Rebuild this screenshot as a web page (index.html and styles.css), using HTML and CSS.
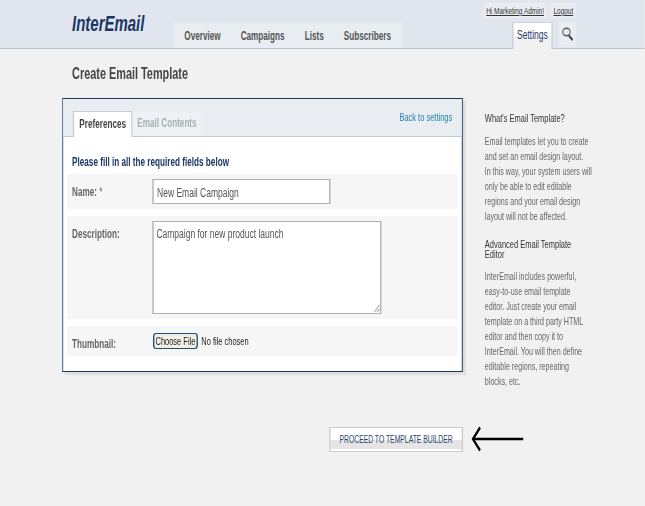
FILE: index.html
```html
<!DOCTYPE html>
<html lang="en">
<head>
<meta charset="utf-8">
<title>Create Email Template</title>
<link rel="stylesheet" href="styles.css">
</head>
<body>
<div class="frame">
<div class="page">
<header class="header">
  <div class="logo">InterEmail</div>
  <nav class="nav">
    <a class="nav-link">Overview</a>
    <a class="nav-link">Campaigns</a>
    <a class="nav-link">Lists</a>
    <a class="nav-link">Subscribers</a>
  </nav>
  <div class="header-right">
    <div class="user-links">
      <a class="user-link user-hello"><span class="underline">Hi Marketing Admin!</span></a>
      <a class="user-link user-logout"><span class="underline">Logout</span></a>
    </div>
    <div class="tools">
      <a class="settings-tab">Settings</a>
      <a class="search-tab">
        <svg width="20" height="14" viewBox="0 0 20 14" aria-hidden="true">
          <ellipse cx="8" cy="5" rx="5.500" ry="3.700" fill="none" stroke="#555" stroke-width="1.500"/>
          <path d="M11.500 8.500l5.500 4.500" stroke="#444" stroke-width="2.600" fill="none"/>
        </svg>
      </a>
    </div>
  </div>
</header>
<h1 class="page-title">Create Email Template</h1>
<main class="content">
  <div class="main-col">
    <section class="card">
      <div class="tabbar">
        <a class="tab tab-active">Preferences</a>
        <a class="tab">Email Contents</a>
        <a class="back-link">Back to settings</a>
      </div>
      <div class="card-body">
        <h2 class="form-title">Please fill in all the required fields below</h2>
        <div class="row row-name">
          <label class="label">Name: <span class="req">*</span></label>
          <input class="text-input" type="text" value="New Email Campaign">
        </div>
        <div class="row row-desc">
          <label class="label">Description:</label>
          <textarea class="text-area">Campaign for new product launch</textarea>
        </div>
        <div class="row row-thumb">
          <label class="label">Thumbnail:</label>
          <input class="file-input" type="file">
        </div>
      </div>
    </section>
    <div class="actions">
      <a class="proceed">PROCEED TO TEMPLATE BUILDER</a>
      <svg class="arrow" width="77" height="26" viewBox="0 0 77 26" aria-hidden="true">
        <path d="M77 13H3" stroke="#000" stroke-width="2.400" fill="none"/>
        <path d="M13 1.500L2.500 13 13 24.500" stroke="#000" stroke-width="3" fill="none"/>
      </svg>
    </div>
  </div>
  <aside class="sidebar">
    <h3 class="side-title">What's Email Template?</h3>
    <p class="side-text">Email templates let you to create and set an email design layout.<br>In this way, your system users will only be able to edit editable regions and your email design layout will not be affected.</p>
    <h3 class="side-title side-title-wrap">Advanced Email Template Editor</h3>
    <p class="side-text">InterEmail includes powerful,<br>easy-to-use email template<br>editor. Just create your email<br>template on a third party HTML<br>editor and then copy it to<br>InterEmail. You will then define<br>editable regions, repeating<br>blocks, etc.</p>
  </aside>
</main>
</div>
</div>
</body>
</html>
```
FILE: styles.css
```css
* { box-sizing: border-box; }
body {
  margin: 0;
  background: #f1f1f1;
  font-family: "Liberation Sans", Arial, sans-serif;
  color: #444;
}
.frame {
  width: 645px;
  height: 506px;
  overflow: hidden;
}
.page {
  width: 948px;
  height: 506px;
  transform: scaleX(0.68);
  transform-origin: 0 0;
}
.header {
  height: 49px;
  background: #e1e6ee;
  border-bottom: 1px solid #b9c6d2;
  display: flex;
  align-items: flex-end;
  padding: 0 101px 0 106px;
}
.logo {
  align-self: flex-start;
  margin-top: 12px;
  width: 150px;
  font: italic bold 22px/24px "Liberation Sans", sans-serif;
  color: #1a3767;
}
.nav {
  height: 25px;
  background: #e9edf2;
  display: flex;
  align-items: center;
  gap: 29.5px;
  padding: 0 16px 0 15px;
}
.nav-link {
  font-size: 12px;
  font-weight: bold;
  color: #555;
}
.header-right {
  margin-left: auto;
  align-self: stretch;
  display: flex;
  flex-direction: column;
  align-items: flex-end;
  justify-content: space-between;
}
.user-links {
  display: flex;
  gap: 6px;
  margin-top: 3px;
}
.user-link {
  font-size: 9.5px;
  line-height: 15px;
  background: #e9edf2;
  color: #333;
  text-align: center;
}
.underline { text-decoration: underline; }
.user-hello { width: 93px; }
.user-logout { width: 37px; }
.tools { display: flex; gap: 9px; }
.settings-tab {
  height: 27px;
  margin-bottom: -1px;
  width: 60px;
  background: linear-gradient(#fff 0, #fff 14px, #f1f1f1 14px);
  border: 2px solid #c9d3dd;
  border-top-width: 1px;
  border-bottom: 0;
  font-size: 12.5px;
  line-height: 25px;
  text-align: center;
  color: #1a3767;
}
.search-tab {
  width: 25px;
  height: 25px;
  background: #e9edf2;
  display: flex;
  justify-content: center;
  padding-top: 5px;
}
.page-title {
  margin: 16px 0 15px 106px;
  font-size: 16px;
  line-height: 18px;
  font-weight: bold;
  color: #444;
}
.content {
  display: flex;
  align-items: flex-start;
  padding-left: 91px;
  gap: 32px;
}
.main-col { width: 590px; }
.card {
  background: #fff;
  height: 274px;
  border: 1px solid #1d3557;
  border-left: 2px solid #5f7d9c;
  border-right: 2px solid #4b6480;
  box-shadow: 4px 3px 0 #dfdfdf;
}
.tabbar {
  height: 38px;
  background: #e9edf2;
  border-bottom: 1px solid #bfc8cf;
  display: flex;
  align-items: flex-end;
  padding: 0 14px;
}
.tab {
  width: 101px;
  height: 25px;
  line-height: 25px;
  text-align: center;
  font-size: 12px;
  font-weight: bold;
  color: #a9b0b6;
  background: #eef1f4;
}
.tab-active {
  width: 88px;
  height: 26px;
  margin-bottom: -1px;
  background: #fff;
  color: #444;
  border: 2px solid #c3ccd4;
  border-top-width: 1px;
  border-bottom: 0;
}
.back-link {
  margin-left: auto;
  align-self: flex-start;
  margin-top: 12px;
  font-size: 11px;
  line-height: 13px;
  color: #1f83ad;
}
.card-body { padding: 0 6px; }
.form-title {
  margin: 0;
  padding: 18px 0 0 7px;
  height: 37px;
  font-size: 12px;
  line-height: 15px;
  font-weight: bold;
  color: #1a3767;
}
.row {
  display: flex;
  align-items: flex-start;
  width: 574px;
  background: #f6f6f6;
  margin-bottom: 7px;
  padding: 5px 0 0 7px;
}
.row-name { height: 35px; }
.row-desc { height: 103px; }
.row-thumb { height: 30px; }
.label {
  width: 118px;
  font-size: 12px;
  font-weight: bold;
  line-height: 14px;
  color: #666;
  padding-top: 6px;
}
.req { font-weight: normal; }
.text-input {
  width: 262px;
  height: 25px;
  border: solid #aeaeae;
  border-width: 1px 2px 1px;
  background: #fff;
  padding: 2px 5px 0;
  font: 12.5px "Liberation Sans", sans-serif;
  color: #555;
  outline: 0;
}
.text-area {
  display: block;
  width: 337px;
  height: 93px;
  border: solid #aeaeae;
  border-width: 1px 2px 1px;
  background: #fff;
  padding: 5px 4px 4px;
  font: 12.5px/15px "Liberation Sans", sans-serif;
  color: #555;
  outline: 0;
}
.file-input {
  margin-top: 2px;
  margin-left: 1px;
  font: 11px "Liberation Sans", sans-serif;
  color: #222;
}
.file-input::file-selector-button {
  height: 16px;
  width: 66px;
  padding: 0;
  margin-right: 5px;
  border: 1px solid #1d4f73;
  border-width: 1px 2px;
  border-radius: 4px;
  background: #f1efe6;
  font: 11px "Liberation Sans", sans-serif;
  color: #222;
}
.actions {
  display: flex;
  align-items: center;
  gap: 12px;
  margin-top: 54px;
  margin-left: 393px;
  width: 286px;
}
.proceed {
  flex: none;
  width: 197px;
  height: 25px;
  border: 1px solid #ccc;
  border-width: 1px 2px;
  background: linear-gradient(#fff 0, #fff 12px, #e5e5e5 12px, #e5e5e5 21px, #fff 21px);
  font-size: 10px;
  line-height: 23px;
  text-align: center;
  color: #2b4470;
}
.arrow { flex: none; }
.sidebar {
  width: 158px;
  padding-top: 15px;
}
.side-title {
  margin: 0 0 10px;
  font-size: 11px;
  line-height: 10.5px;
  font-weight: normal;
  color: #333;
}
.side-title-wrap { margin-bottom: 9px; }
.side-text {
  margin: 0 0 15px;
  font-size: 10.5px;
  line-height: 15px;
  color: #666;
}
```
